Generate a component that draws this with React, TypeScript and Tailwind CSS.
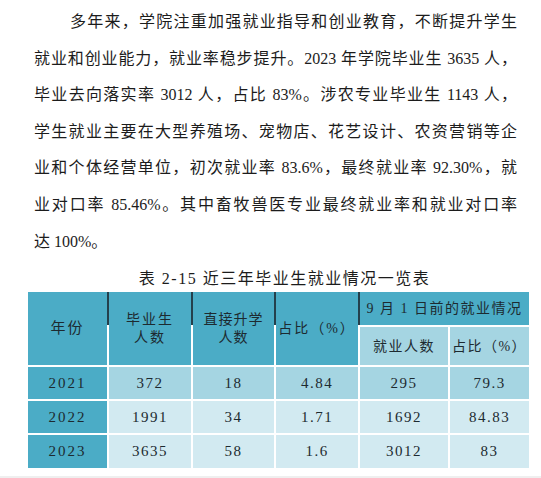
const serif = "font-['Liberation_Serif','Noto_Sans_CJK_SC',serif]";

const lines = [
  "多年来，学院注重加强就业指导和创业教育，不断提升学生",
  "就业和创业能力，就业率稳步提升。2023 年学院毕业生 3635 人，",
  "毕业去向落实率 3012 人，占比 83%。涉农专业毕业生 1143 人，",
  "学生就业主要在大型养殖场、宠物店、花艺设计、农资营销等企",
  "业和个体经营单位，初次就业率 83.6%，最终就业率 92.30%，就",
  "业对口率 85.46%。其中畜牧兽医专业最终就业率和就业对口率",
];

const rows = [
  { year: "2021", grads: "372", further: "18", pct: "4.84", employed: "295", rate: "79.3", light: false },
  { year: "2022", grads: "1991", further: "34", pct: "1.71", employed: "1692", rate: "84.83", light: true },
  { year: "2023", grads: "3635", further: "58", pct: "1.6", employed: "3012", rate: "83", light: true },
];

function Rule() {
  // dark separator the PDF renderer leaves on the top header row
  return <span className="absolute -left-[2px] top-0 h-[33px] w-[2px] bg-[#24404c]" />;
}

export default function App() {
  return (
    <div className={`flex h-[478px] w-[541px] flex-col bg-white text-[#1c1c1c] ${serif}`}>
      <div className="pl-[34px] pr-[24px] pt-[4px] text-[16px] leading-[36.6px]">
        {lines.map((line, i) => (
          <div
            key={i}
            className={`text-justify [text-align-last:justify] ${i === 0 ? "pl-[36px]" : ""}`}
          >
            {line}
          </div>
        ))}
        <div>达 100%。</div>
      </div>

      <div className="ml-[28px] w-[501px]">
        <div className="mt-[6px] pl-[12px] text-center text-[16px] leading-[26px] tracking-[1.5px]">
          表 2-15 近三年毕业生就业情况一览表
        </div>

        <div className="grid grid-cols-[79px_82px_81px_82px_88px_79px] grid-rows-[33px_38px_32px_32px_33px] gap-[2px] text-center text-[14px] text-[#1d2a30]">
          <div className="row-span-2 flex items-center justify-center bg-[#4bacc6] text-[15px] tracking-[2px]">
            年份
          </div>
          <div className="relative row-span-2 flex flex-col items-center justify-center bg-[#4bacc6] leading-[18px] tracking-[2px]">
            <Rule />
            <span>毕业生</span>
            <span>人数</span>
          </div>
          <div className="relative row-span-2 flex flex-col items-center justify-center bg-[#4bacc6] leading-[18px] tracking-[1px]">
            <Rule />
            <span>直接升学</span>
            <span>人数</span>
          </div>
          <div className="relative row-span-2 flex items-center justify-center bg-[#4bacc6] tracking-[2px]">
            <Rule />
            占比（%）
          </div>
          <div className="relative col-span-2 flex items-center justify-center bg-[#4bacc6] tracking-[1.5px]">
            <Rule />
            9 月 1 日前的就业情况
          </div>
          <div className="flex items-center justify-center bg-[#a5d5e2] tracking-[1.5px]">就业人数</div>
          <div className="flex items-center justify-center bg-[#a5d5e2] tracking-[1.5px]">占比（%）</div>

          {rows.map((r) => {
            const bg = r.light ? "bg-[#d2eaf1]" : "bg-[#a5d5e2]";
            const cell = `flex items-center justify-center text-[15px] tracking-[1.5px] ${bg}`;
            return [
              <div key={r.year + "y"} className="flex items-center justify-center bg-[#4bacc6] text-[15px] tracking-[2px]">
                {r.year}
              </div>,
              <div key={r.year + "g"} className={cell}>{r.grads}</div>,
              <div key={r.year + "f"} className={cell}>{r.further}</div>,
              <div key={r.year + "p"} className={cell}>{r.pct}</div>,
              <div key={r.year + "e"} className={cell}>{r.employed}</div>,
              <div key={r.year + "r"} className={cell}>{r.rate}</div>,
            ];
          })}
        </div>
      </div>

      <div className="mt-auto h-[2px] bg-[#efefef]" />
    </div>
  );
}
